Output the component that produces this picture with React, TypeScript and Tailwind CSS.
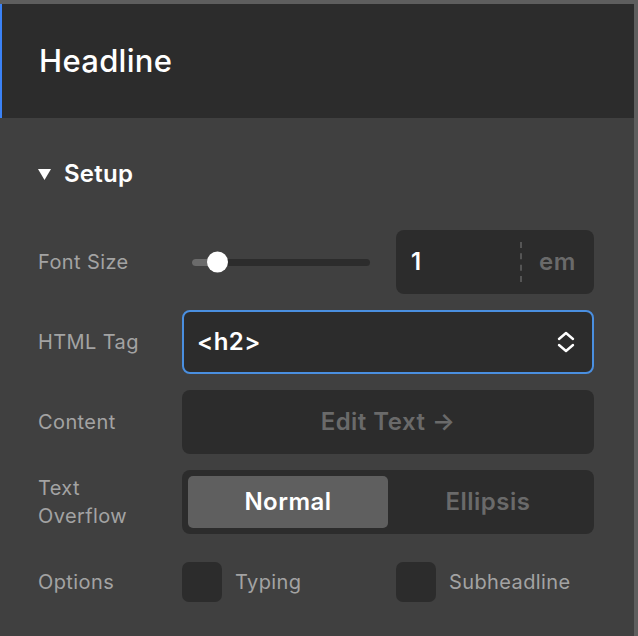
import { useState } from 'react';

const font = { fontFamily: 'Inter, "Noto Sans", sans-serif' };

function Label({ children }: { children: React.ReactNode }) {
  return (
    <div className="w-[144px] shrink-0 text-[20px] leading-[28px] tracking-[0.02em] text-[#a3a3a3]">{children}</div>
  );
}

export default function App() {
  const [overflow, setOverflow] = useState<'normal' | 'ellipsis'>('normal');
  const [typing, setTyping] = useState(false);
  const [sub, setSub] = useState(false);

  return (
    <div className="min-h-[636px] w-[638px] bg-[#5e5e5e] pt-[4px] pr-[4px]" style={font}>
      <div className="min-h-[632px] bg-[#404040]">
        <div className="flex h-[114px] items-center border-l-2 border-[#3b82f6] bg-[#2c2c2c] pl-[37px]">
          <h1 className="text-[31px] font-medium tracking-[0.01em] text-white">Headline</h1>
        </div>

        <div className="pl-[38px] pr-[40px] pt-[39px]">
          <div className="flex h-[34px] items-center gap-[13px]">
            <svg width="13" height="11" viewBox="0 0 13 11">
              <path d="M0 0 H13 L6.5 11 Z" fill="#fff" />
            </svg>
            <span className="text-[24px] font-semibold tracking-[0.01em] text-white">Setup</span>
          </div>

          <div className="mt-[39px] flex flex-col gap-[16px]">
            <div className="flex items-center">
              <Label>Font Size</Label>
              <div className="flex flex-1 items-center gap-[26px]">
                <div className="relative ml-[10px] h-[7px] w-[178px] rounded-full bg-[#2c2c2c]">
                  <div className="absolute left-0 top-0 h-full w-[25px] rounded-l-full bg-[#6b6b6b]" />
                  <div className="absolute left-[15px] top-1/2 h-[21px] w-[21px] -translate-y-1/2 rounded-full bg-white" />
                </div>
                <div className="flex h-[64px] flex-1 items-center rounded-[8px] bg-[#2c2c2c]">
                  <span className="w-[124px] pl-[15px] text-[24px] font-semibold text-white">1</span>
                  <div className="h-[40px] border-l-2 border-dashed border-[#555]" />
                  <span className="flex-1 pl-[17px] text-[24px] font-semibold tracking-[0.02em] text-[#6a6a6a]">em</span>
                </div>
              </div>
            </div>

            <div className="flex items-center">
              <Label>HTML Tag</Label>
              <div className="flex h-[64px] flex-1 items-center justify-between rounded-[8px] border-2 border-[#4a8fe0] bg-[#2c2c2c] pl-[13px] pr-[17px]">
                <span className="text-[24px] font-semibold tracking-[0.02em] text-white">&lt;h2&gt;</span>
                <svg width="18" height="22" viewBox="0 0 18 22" fill="none" stroke="#fff" strokeWidth="2.4" strokeLinecap="round" strokeLinejoin="round">
                  <path d="M2 8 L9 2 L16 8" />
                  <path d="M2 14 L9 20 L16 14" />
                </svg>
              </div>
            </div>

            <div className="flex items-center">
              <Label>Content</Label>
              <button className="flex h-[64px] flex-1 items-center justify-center rounded-[8px] bg-[#2c2c2c] text-[24px] font-semibold tracking-[0.02em] text-[#6a6a6a]">
                Edit Text →
              </button>
            </div>

            <div className="flex items-center">
              <Label>
                Text
                <br />
                Overflow
              </Label>
              <div className="flex h-[64px] flex-1 rounded-[8px] bg-[#2c2c2c] p-[6px]">
                <button
                  onClick={() => setOverflow('normal')}
                  className={`flex-1 rounded-[5px] text-[24px] font-semibold tracking-[0.02em] ${overflow === 'normal' ? 'bg-[#5f5f5f] text-white' : 'text-[#6a6a6a]'}`}
                >
                  Normal
                </button>
                <button
                  onClick={() => setOverflow('ellipsis')}
                  className={`flex-1 rounded-[5px] text-[24px] font-semibold tracking-[0.02em] ${overflow === 'ellipsis' ? 'bg-[#5f5f5f] text-white' : 'text-[#6a6a6a]'}`}
                >
                  Ellipsis
                </button>
              </div>
            </div>

            <div className="mt-[12px] flex items-center">
              <Label>Options</Label>
              <div className="flex flex-1">
                <label className="flex w-[214px] cursor-pointer items-center gap-[13px]" onClick={() => setTyping(!typing)}>
                  <span className={`h-[40px] w-[40px] rounded-[7px] ${typing ? 'bg-[#4a8fe0]' : 'bg-[#2c2c2c]'}`} />
                  <span className="text-[20px] tracking-[0.02em] text-[#a3a3a3]">Typing</span>
                </label>
                <label className="flex cursor-pointer items-center gap-[13px]" onClick={() => setSub(!sub)}>
                  <span className={`h-[40px] w-[40px] rounded-[7px] ${sub ? 'bg-[#4a8fe0]' : 'bg-[#2c2c2c]'}`} />
                  <span className="text-[20px] tracking-[0.02em] text-[#a3a3a3]">Subheadline</span>
                </label>
              </div>
            </div>
          </div>
        </div>
      </div>
    </div>
  );
}
